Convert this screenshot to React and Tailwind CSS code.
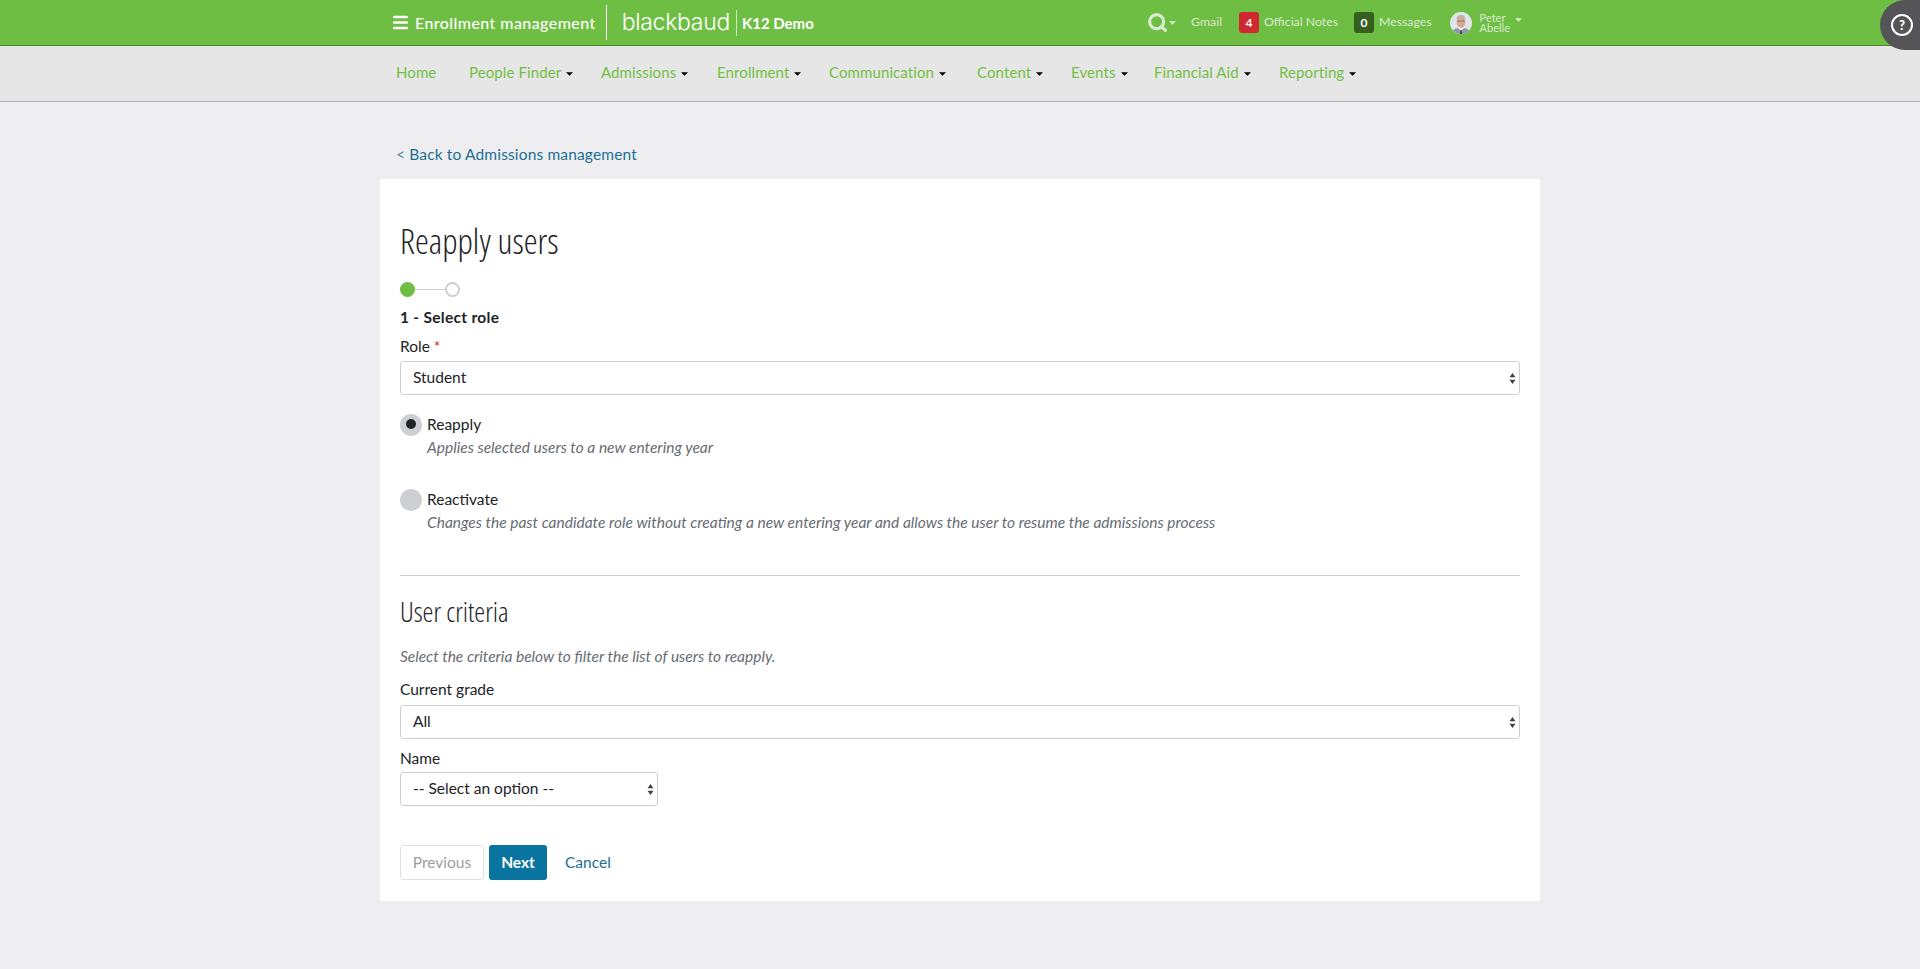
import React from "react";
import { Menu, Search } from "lucide-react";

function Caret({ className = "" }) {
  return (
    <svg viewBox="0 0 8 4" className={`w-[7px] h-[4px] ${className}`} aria-hidden="true">
      <path d="M0 0h8L4 4z" fill="currentColor" />
    </svg>
  );
}

function Select({ value, className = "" }) {
  return (
    <div className={`relative ${className}`}>
      <select
        defaultValue={value}
        className="block w-full h-[34px] appearance-none rounded-[3px] border border-[#cdcfd2] bg-white pl-3 pr-6 text-[15.5px] text-[#212327] outline-none"
      >
        <option>{value}</option>
      </select>
      <svg viewBox="0 0 7 13" className="pointer-events-none absolute right-[4px] top-[11px] w-[7px] h-[13px] text-[#444]" aria-hidden="true">
        <path d="M3.500 1 6.500 5.200h-6zM3.500 12 .5 7.800h6z" fill="currentColor" />
      </svg>
    </div>
  );
}

function Radio({ checked, label, desc, className = "" }) {
  return (
    <div className={`flex ${className}`}>
      <span className="flex h-[22px] w-[22px] shrink-0 items-center justify-center rounded-full bg-[#cdcfd2]">
        {checked && <span className="h-[10px] w-[10px] -translate-y-[1px] rounded-full bg-[#212327]" />}
      </span>
      <div className="-mt-[1px] ml-[5px]">
        <div className="text-[15.5px] leading-[22px] text-[#212327]">{label}</div>
        <div className="mt-[1px] text-[15.5px] italic leading-[22px] text-[#686c73]">{desc}</div>
      </div>
    </div>
  );
}

const NAV = [
  ["Home", false, "w-[73px]"],
  ["People Finder", true, "w-[132px]"],
  ["Admissions", true, "w-[116px]"],
  ["Enrollment", true, "w-[112px]"],
  ["Communication", true, "w-[148px]"],
  ["Content", true, "w-[94px]"],
  ["Events", true, "w-[83px]"],
  ["Financial Aid", true, "w-[125px]"],
  ["Reporting", true, "w-[90px]"],
];

function Avatar() {
  return (
    <svg viewBox="0 0 22 22" className="h-[22px] w-[22px] shrink-0 rounded-full" aria-hidden="true">
      <rect width="22" height="22" fill="#dfe6ea" />
      <path d="M1 22c1-5 5-6 10-6s9 1 10 6z" fill="#8e98a6" />
      <path d="M8 16l3 3 3-3z" fill="#f3f3f3" />
      <path d="M10.400 18h1.200l.6 4H9.800z" fill="#3c4a68" />
      <ellipse cx="11" cy="10" rx="4.400" ry="5.800" fill="#d8a58e" />
      <path d="M6.400 8c0-4 2.200-5 4.600-5s4.600 1 4.600 5c-1-2-2-2.500-4.600-2.500S7.400 6 6.400 8z" fill="#b9b4ae" />
      <path d="M7.600 9h2.800M11.600 9h2.800" stroke="#5b4b47" strokeWidth=".7" />
    </svg>
  );
}

export default function App() {
  return (
    <div className="relative min-h-screen overflow-hidden bg-[#eeeef0] font-['Lato','Liberation_Sans',sans-serif] text-[#212327]">
      <header className="h-[46px] border-b border-[#4d8a30] bg-[#6fbe44]">
        <div className="mx-auto flex h-full w-[1160px] items-center">
          <Menu className="ml-[11px] h-[19px] w-[19px] text-white" strokeWidth={3} />
          <span className="ml-[5px] text-[16px] font-medium tracking-[0.42px] text-white">Enrollment management</span>
          <span className="ml-[10px] h-[35px] w-px bg-white" />
          <span className="ml-[15px] font-['Inter',sans-serif] text-[23px] font-light leading-none tracking-[-0.3px] text-white">blackbaud</span>
          <span className="ml-[6px] h-[26px] w-px bg-[#cfe8c2]" />
          <span className="ml-[5px] mt-[1px] text-[15px] font-bold text-white">K12 Demo</span>
          <div className="ml-auto mr-[18px] flex items-center text-[12.3px] text-[#d9ecd0]">
            <Search className="h-[21px] w-[21px] text-[#d9ecd0]" strokeWidth={3.6} />
            <Caret className="ml-[1px]" />
            <span className="ml-[15px]">Gmail</span>
            <span className="ml-[17px] flex h-[21px] w-[20px] items-center justify-center rounded-[3px] bg-[#d0282e] text-[12px] font-bold text-white">4</span>
            <span className="ml-[5px]">Official Notes</span>
            <span className="ml-[16px] flex h-[21px] w-[20px] items-center justify-center rounded-[3px] bg-[#35601f] text-[12px] font-bold text-white">0</span>
            <span className="ml-[5px]">Messages</span>
            <span className="ml-[18px]"><Avatar /></span>
            <span className="ml-[8px] text-[11px] leading-[10px]">Peter<br />Abelle</span>
            <Caret className="ml-[5px] -translate-y-[3px]" />
          </div>
        </div>
      </header>
      <div className="absolute left-[1880px] top-0 flex h-[50px] w-[40px] items-center rounded-l-full bg-[#555558] pl-[11px]">
        <span className="flex h-[22px] w-[22px] items-center justify-center rounded-full border-2 border-white text-[13px] font-black leading-none text-white">?</span>
      </div>

      <nav className="h-[56px] border-b border-[#adadad] bg-[#e6e6e6]">
        <div className="mx-auto flex h-[52px] w-[1160px] items-center pl-[16px] text-[15px] tracking-[0.1px] text-[#72bf44]">
          {NAV.map(([t, c, w]) => (
            <div key={t} className={`flex shrink-0 items-center ${w}`}>
              <span>{t}</span>
              {c && <Caret className="ml-[5px] mt-[3px] text-black" />}
            </div>
          ))}
        </div>
      </nav>

      <main className="mx-auto w-[1160px]">
        <div className="h-[77px] pl-[16px] pt-[41px] text-[15.5px] leading-[22px] tracking-[0.15px] text-[#1c6e94]">
          <span className="text-[#4f8aa8]">&lt;</span> Back to Admissions management
        </div>
        <section className="h-[722px] bg-white px-[20px] pt-[37px]">
          <h1 className="h-[50px] font-['Open_Sans',sans-serif] text-[35px] font-light leading-[50px] text-[#212327] [font-stretch:75%]">Reapply users</h1>
          <div className="mt-[16px] flex h-[15px] items-center">
            <span className="h-[15px] w-[15px] rounded-full bg-[#6fbe44]" />
            <span className="h-px w-[30px] bg-[#cdcfd2]" />
            <span className="h-[15px] w-[15px] rounded-full border-2 border-[#cdcfd2]" />
          </div>
          <div className="mt-[9px] text-[15.5px] font-bold leading-[22px] tracking-[0.3px]">1 - Select role</div>
          <div className="mt-[7px] text-[15.5px] leading-[22px]">Role <span className="text-[#d0282e]">*</span></div>
          <Select value="Student" className="mt-[4px]" />
          <Radio checked label="Reapply" desc="Applies selected users to a new entering year" className="mt-[19px]" />
          <Radio label="Reactivate" desc="Changes the past candidate role without creating a new entering year and allows the user to resume the admissions process" className="mt-[31px]" />
          <hr className="mt-[42px] border-t border-[#cdcfd2]" />
          <h2 className="mt-[19px] font-['Open_Sans',sans-serif] text-[27.5px] font-light leading-[34px] text-[#212327] [font-stretch:75%]">User criteria</h2>
          <p className="mt-[16px] text-[15.5px] italic leading-[22px] text-[#686c73]">Select the criteria below to filter the list of users to reapply.</p>
          <div className="mt-[11px] text-[15.5px] leading-[22px]">Current grade</div>
          <Select value="All" className="mt-[5px]" />
          <div className="mt-[8px] text-[15.5px] leading-[22px]">Name</div>
          <Select value="-- Select an option --" className="mt-[3px] w-[258px]" />
          <div className="mt-[39px] flex items-center text-[15.5px]">
            <button className="h-[35px] w-[84px] rounded-[3px] border border-[#dfe0e2] text-[#9a9da2]">Previous</button>
            <button className="ml-[5px] h-[35px] w-[58px] rounded-[3px] bg-[#0a74a1] font-bold text-white">Next</button>
            <a className="ml-[18px] text-[#1c6e94]">Cancel</a>
          </div>
        </section>
      </main>
    </div>
  );
}
